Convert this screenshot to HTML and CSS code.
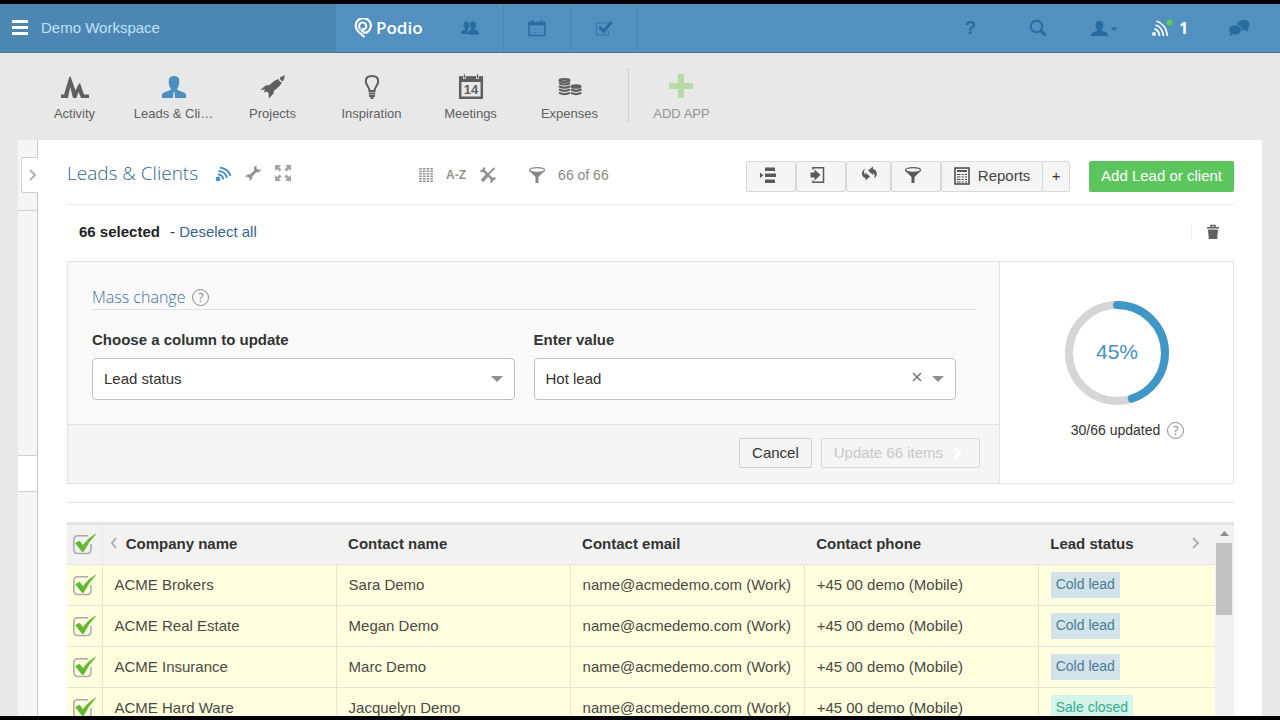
FILE: index.html
```
<!DOCTYPE html>
<html lang="en">
<head>
    <meta charset="UTF-8">
    <meta name="viewport" content="width=device-width, initial-scale=1.0">
    <title>Leads &amp; Clients - Podio</title>
    <link rel="stylesheet" href="styles.css">
</head>
<body>
    <header class="navbar">
        <div class="workspace">
            <button class="menu-button" aria-label="Menu">
                <svg width="18" height="16" viewBox="0 0 18 16" fill="currentColor"><path d="M1 0h16v3H1zM1 6h16v3H1zM1 12h16v3H1z"/></svg>
            </button>
            <a href="#" class="workspace-name">Demo Workspace</a>
        </div>
        <nav class="nav-main">
            <a href="#" class="brand">
                <svg width="18" height="20" viewBox="0 0 18 20" fill="none" stroke="currentColor" stroke-width="2.200"><path d="M10.500 19L4 13.200A7.600 7.600 0 1 1 13.500 14Q12 15 10 14.700"/><path d="M10.500 15L7 11.500M6.500 11A3.600 3.600 0 1 1 11 10.800Q9.500 11.800 8 10.500"/></svg>
                Podio
            </a>
            <a href="#" class="nav-tab" aria-label="People">
                <svg width="18" height="16" viewBox="0 0 18 16" fill="currentColor"><path d="M0 14c0-3 1.500-3.500 4-4.500V8.500C1.500 6 2.500 1.500 5.500 1.500 7 1.500 8.300 2.500 8.300 5S7.500 8 7.200 8.500v1.200L5.500 14z"/><path d="M6.500 14.500c0-3.200 1.500-4 3.700-5V8.300C8 6 8.500 1.500 12 1.500S16 6 13.800 8.300v1.200c2.700 1 4.200 1.800 4.200 5z"/></svg>
            </a>
            <a href="#" class="nav-tab" aria-label="Calendar">
                <svg width="18" height="17" viewBox="0 0 18 17" fill="none" stroke="currentColor"><path d="M1 2.500h16v13H1z" stroke-width="1.500"/><path d="M1 4h16" stroke-width="2.500"/><path d="M4.500 0v4M13.500 0v4" stroke-width="1.500"/><path d="M4 9.500h10M4 12.500h10" stroke-dasharray="1.500 1.300" stroke-opacity=".6"/></svg>
            </a>
            <a href="#" class="nav-tab" aria-label="Tasks">
                <svg width="18" height="17" viewBox="0 0 18 17" fill="none" stroke="currentColor"><path d="M12 3H1.500v12h12v-4" stroke-opacity=".7"/><path d="M4.500 7l4 4.500L16.500 2" stroke-width="3"/></svg>
            </a>
        </nav>
        <nav class="nav-tools">
            <a href="#" class="nav-tool nav-help" aria-label="Help">?</a>
            <a href="#" class="nav-tool" aria-label="Search">
                <svg width="18" height="18" viewBox="0 0 18 18" fill="none" stroke="currentColor"><circle cx="7.500" cy="7.500" r="5.800" stroke-width="2"/><path d="M11.500 11.500l5 5" stroke-width="3"/></svg>
            </a>
            <a href="#" class="nav-tool" aria-label="Account">
                <svg width="27" height="17" viewBox="0 0 27 17" fill="currentColor"><path d="M0 16c0-3 1-3.500 6-5V9.500C3.500 6 4 1 8.500 1S13 6 11 9.500V11c5 1.500 6 2 6 5z"/><path d="M19.500 7.500h7l-3.500 3.500z"/></svg>
            </a>
            <a href="#" class="nav-tool nav-feed" aria-label="Notifications">
                <svg width="22" height="18" viewBox="0 0 22 18" fill="none" stroke="currentColor" stroke-width="1.800"><circle cx="3" cy="15" r="2" fill="currentColor" stroke="none"/><path d="M3.500 10q4.500 1 5 7M4.500 6q7 2 8 11M5.500 2q9.500 3 11 15"/><circle cx="18.500" cy="3.500" r="3" fill="#5fcb50" stroke="none"/></svg>
                <b>1</b>
            </a>
            <a href="#" class="nav-tool" aria-label="Chat">
                <svg width="22" height="18" viewBox="0 0 22 18" fill="currentColor"><path d="M9 5.500C10 2 13 1 16 1c4 0 5.500 2.500 5.500 5 0 2-1 3-2 3.800L20.500 13l-3.800-2c-1 .2-2 .1-3 0 0-3-1.500-5-4.700-5.500z"/><path d="M7 6.500c4 0 6 2 6 4.500s-2.500 4.500-6 4.500l-2-.2L1.500 17l.8-3.200C-.5 10.500 1.500 6.500 7 6.500z"/></svg>
            </a>
        </nav>
    </header>

    <nav class="app-bar">
        <a href="#" class="app">
            <svg width="28" height="28" viewBox="0 0 28 28" fill="currentColor"><path d="M0 21.500h3L8.500 3.500h1l5 14L18 10.500h1.200l3.800 11h5v3.500h-8l-2.500-6-2 6H12L9.200 14 7 25H0z"/></svg>
            <span>Activity</span>
        </a>
        <a href="#" class="app active">
            <svg width="28" height="28" viewBox="0 0 28 28" fill="currentColor"><path d="M2 25v-3c0-2 3-3 7.500-4.500L11 16C8.500 13 8.500 9 9 6c.5-2 2.500-3 5-3s4.500 1 5 3c.5 3 .5 7-2 10l1.500 1.500C23 19 26 20 26 22v3H15l-.5-6h-1L13 25z"/></svg>
            <span>Leads &amp; Cli…</span>
        </a>
        <a href="#" class="app">
            <svg width="28" height="28" viewBox="0 0 28 28" fill="currentColor"><path d="M21 4.500L26 2l-1.500 5.500c-.5.800-1.500.800-2.500-.3s-1.500-2-1-2.700z"/><path d="M19.500 6c.5 2 1.500 3 3.500 3.500-2 3.500-5 6-8 8l-.5 3-4.500 5-.5-5.500L8 18.500l-3 1 1-3-4.500.5 5-4.500 4-.5C13 9.500 16 7 19.500 6z"/></svg>
            <span>Projects</span>
        </a>
        <a href="#" class="app">
            <svg width="28" height="28" viewBox="0 0 28 28" fill="none" stroke="currentColor" stroke-width="2"><path d="M11.500 18c0-4-3.700-5.500-3.700-9.700C7.800 4.800 10.500 3 14 3s6.200 1.800 6.200 5.300C20.200 12.500 16.500 14 16.500 18z"/><path d="M10.800 20.500h6.400M11 23h6M12.500 25h3"/></svg>
            <span>Inspiration</span>
        </a>
        <a href="#" class="app">
            <svg width="28" height="28" viewBox="0 0 28 28"><path d="M3.200 4.500h21.600v20.200H3.200z" fill="none" stroke="currentColor" stroke-width="2.500"/><path d="M2 3.500h24v5.500H2z" fill="currentColor"/><path d="M7.500 2v4M20.500 2v4" stroke="#e8e8e8" stroke-width="3"/><path d="M7.500 1.500v4M20.500 1.500v4" stroke="currentColor" stroke-width="1.500"/><text x="14" y="21" class="calendar-day">14</text></svg>
            <span>Meetings</span>
        </a>
        <a href="#" class="app">
            <svg width="28" height="28" viewBox="0 0 28 28" fill="none" stroke="currentColor" stroke-width="2.200"><ellipse cx="8.500" cy="7.500" rx="5" ry="1.300"/><path d="M3 10q5.500 3 11 0M3 13.200q5.500 3 11 0M3 16.400q5.500 3 11 0M3 19.600q5.500 3 11 0"/><ellipse cx="20" cy="13.500" rx="4.500" ry="1.200"/><path d="M15 16.300q5 3 10.500 0M15 19.600q5 3 10.500 0"/></svg>
            <span>Expenses</span>
        </a>
        <a href="#" class="app add-app">
            <svg width="28" height="28" viewBox="0 0 28 28" fill="currentColor"><path d="M10 1h6v9h9v6h-9v9h-6v-9H1v-6h9z"/></svg>
            <span>ADD APP</span>
        </a>
    </nav>

    <div class="panel">
        <aside class="sidebar">
            <div class="sidebar-top">
                <button class="sidebar-toggle" aria-label="Show sidebar">
                    <svg width="8" height="12" viewBox="0 0 8 12" fill="none" stroke="currentColor" stroke-width="2"><path d="M1 1l5 5-5 5"/></svg>
                </button>
            </div>
            <div class="sidebar-tab"></div>
        </aside>

        <main class="content">
            <div class="toolbar">
                <div class="title-group">
                    <h1>Leads &amp; Clients</h1>
                    <button class="icon-button follow" aria-label="Follow">
                        <svg width="18" height="18" viewBox="0 0 18 18" fill="none" stroke="currentColor" stroke-width="1.800"><circle cx="4" cy="15" r="2.400" fill="currentColor" stroke="none"/><path d="M4 10.500q4.500 0 5.500 5M4.500 7q7 .5 8.500 7M6 3.500q8.500 1.500 10.500 8.500"/></svg>
                    </button>
                    <button class="icon-button" aria-label="Settings">
                        <svg width="18" height="18" viewBox="0 0 18 18"><path d="M12.500 1.500c-2.500.8-3 3-2.300 5L6 10.500c-2-.5-4 .3-4.500 3l2.200-.8 2 1.500-.5 2.500c2-.2 3.500-2.200 3-4.200l4.100-4.200c2.200.5 4.200-.8 4.700-3.200l-2.500 1-2-1.500z" fill="currentColor"/></svg>
                    </button>
                    <button class="icon-button expand" aria-label="Full screen">
                        <svg width="18" height="18" viewBox="0 0 18 18" fill="currentColor"><path d="M1 1h6L5 3l2.500 2.500-2 2L3 5 1 7zM17 1v6l-2-2-2.500 2.500-2-2L13 3l-2-2zM1 17v-6l2 2 2.500-2.500 2 2L5 15l2 2zM17 17h-6l2-2-2.500-2.500 2-2L15 13l2-2z"/></svg>
                    </button>
                </div>
                <div class="view-group">
                    <button class="icon-button" aria-label="Columns">
                        <svg width="14" height="14" viewBox="0 0 14 14" stroke="currentColor" stroke-width="2.600" stroke-dasharray="1.500 1"><path d="M1.500 0v14M5.200 0v14M8.900 0v14M12.600 0v14"/></svg>
                    </button>
                    <button class="icon-button sort" aria-label="Sort">A-Z</button>
                    <button class="icon-button" aria-label="Tools">
                        <svg width="18" height="18" viewBox="0 0 18 18" fill="none" stroke="currentColor"><path d="M15.500 2L8 9.500" stroke-width="1.800"/><path d="M8.500 9L3 15" stroke-width="3.500"/><path d="M4.500 4.500l8.500 8.500" stroke-width="2.500"/><path d="M1.500 4.500q4 2 3.500-3M12.500 16.500q-.5-4 4-4" stroke-width="2.500"/></svg>
                    </button>
                    <button class="filter-count">
                        <svg width="18" height="18" viewBox="0 0 18 18"><ellipse cx="9" cy="4" rx="7.500" ry="2.300" fill="none" stroke="currentColor" stroke-width="1.300"/><path d="M1 4.500q8 4 16 0L10.500 11v6h-3v-6z" fill="currentColor"/></svg>
                        66 of 66
                    </button>
                </div>
                <div class="action-group">
                    <button class="tool-button" aria-label="Layout">
                        <svg width="18" height="18" viewBox="0 0 18 18" fill="currentColor"><path d="M6 1.500h10v3.500H6zM6 7.500h11v3.500H6zM6 13.500h10V17H6zM1 6.500L4.500 9.200 1 12z"/></svg>
                    </button>
                    <button class="tool-button" aria-label="Import">
                        <svg width="18" height="18" viewBox="0 0 18 18"><path d="M4 3.500V1.800h10.500v14.400H4v-1.700" fill="none" stroke="currentColor" stroke-width="1.500"/><path d="M1.500 6.500h4v-3l6 5.500-6 5.500v-3h-4z" fill="currentColor"/></svg>
                    </button>
                    <button class="tool-button narrow" aria-label="Sync">
                        <svg width="18" height="18" viewBox="0 0 18 18" fill="currentColor"><path d="M5.500 2.500C3.500 4.500 3.500 7 5.500 9V6.500L10 10.500l-4.500 4V12C1 11 .5 5 5.500 2.500z"/><path d="M8 4.500l5-4V3c4.500 1 5 6 1.500 9.500.5-2.500 0-4.500-1.500-5.500v2z"/></svg>
                    </button>
                    <button class="tool-button" aria-label="Filter">
                        <svg width="18" height="18" viewBox="0 0 18 18"><ellipse cx="9" cy="4" rx="7.500" ry="2.300" fill="none" stroke="currentColor" stroke-width="1.300"/><path d="M1 4.500q8 4 16 0L10.500 11v6h-3v-6z" fill="currentColor"/></svg>
                    </button>
                    <button class="reports-button">
                        <svg width="16" height="18" viewBox="0 0 16 18" fill="none" stroke="currentColor"><path d="M1 1h14v16H1z" stroke-width="1.500"/><path d="M3 4h10" stroke-width="1.800"/><path d="M3 7.500h10M3 10h10M3 12.500h10M3 15h10" stroke-dasharray="3.500 1.200 2 1.200 2.100 0"/></svg>
                        Reports
                    </button>
                    <button class="reports-add" aria-label="Add report">+</button>
                    <button class="add-button">Add Lead or client</button>
                </div>
            </div>

            <div class="selection">
                <p><strong>66 selected</strong> - <a href="#">Deselect all</a></p>
                <button class="delete-button" aria-label="Delete">
                    <svg width="14" height="16" viewBox="0 0 14 16"><path d="M2 5.500h10L11.200 15H2.800z" fill="currentColor"/><path d="M1 3.700h12M5 3V1.500h4V3" fill="none" stroke="currentColor" stroke-width="1.500"/></svg>
                </button>
            </div>

            <section class="mass-change">
                <form class="mass-form">
                    <div class="mass-fields">
                        <h2>Mass change <span class="help">?</span></h2>
                        <div class="field-row">
                            <div class="field">
                                <label for="column">Choose a column to update</label>
                                <select id="column">
                                    <option>Lead status</option>
                                </select>
                            </div>
                            <div class="field">
                                <label for="value">Enter value</label>
                                <div class="clearable">
                                    <select id="value">
                                        <option>Hot lead</option>
                                    </select>
                                    <button type="button" class="clear" aria-label="Clear value">
                                        <svg width="10" height="10" viewBox="0 0 10 10" stroke="currentColor" stroke-width="1.600"><path d="M1 1l8 8M9 1L1 9"/></svg>
                                    </button>
                                </div>
                            </div>
                        </div>
                    </div>
                    <div class="mass-actions">
                        <button type="button" class="form-button">Cancel</button>
                        <button type="button" class="form-button update" disabled>
                            Update 66 items
                            <svg width="10" height="14" viewBox="0 0 10 14" fill="none" stroke="#fff" stroke-width="3"><path d="M2 2l5 5-5 5"/></svg>
                        </button>
                    </div>
                </form>
                <div class="progress">
                    <svg width="106" height="106" viewBox="0 0 106 106" fill="none" stroke-width="8">
                        <circle cx="53" cy="53" r="48" stroke="#d6d6d6"/>
                        <circle cx="53" cy="53" r="48" stroke="#3f97c7" stroke-linecap="round" pathLength="100" stroke-dasharray="45 55" transform="rotate(-90 53 53)"/>
                        <text x="53" y="59" class="percent">45%</text>
                    </svg>
                    <p>30/66 updated <span class="help">?</span></p>
                </div>
            </section>

            <div class="grid">
                <table>
                    <thead>
                        <tr>
                            <th class="check"><input type="checkbox" aria-label="Select all" checked></th>
                            <th class="first">
                                <button class="scroll-button" aria-label="Previous columns"><svg width="8" height="12" viewBox="0 0 8 12" fill="none" stroke="currentColor" stroke-width="2"><path d="M6 1L2 6l4 5"/></svg></button>
                                Company name
                            </th>
                            <th>Contact name</th>
                            <th>Contact email</th>
                            <th>Contact phone</th>
                            <th class="status">
                                <div class="status-head">
                                    Lead status
                                    <button class="scroll-button" aria-label="Next columns"><svg width="8" height="12" viewBox="0 0 8 12" fill="none" stroke="currentColor" stroke-width="2"><path d="M1 1l5 5-5 5"/></svg></button>
                                </div>
                            </th>
                        </tr>
                    </thead>
                    <tbody>
                        <tr>
                            <td class="check"><input type="checkbox" aria-label="Select ACME Brokers" checked></td>
                            <td>ACME Brokers</td>
                            <td>Sara Demo</td>
                            <td>name@acmedemo.com (Work)</td>
                            <td>+45 00 demo (Mobile)</td>
                            <td><span class="tag cold">Cold lead</span></td>
                        </tr>
                        <tr>
                            <td class="check"><input type="checkbox" aria-label="Select ACME Real Estate" checked></td>
                            <td>ACME Real Estate</td>
                            <td>Megan Demo</td>
                            <td>name@acmedemo.com (Work)</td>
                            <td>+45 00 demo (Mobile)</td>
                            <td><span class="tag cold">Cold lead</span></td>
                        </tr>
                        <tr>
                            <td class="check"><input type="checkbox" aria-label="Select ACME Insurance" checked></td>
                            <td>ACME Insurance</td>
                            <td>Marc Demo</td>
                            <td>name@acmedemo.com (Work)</td>
                            <td>+45 00 demo (Mobile)</td>
                            <td><span class="tag cold">Cold lead</span></td>
                        </tr>
                        <tr>
                            <td class="check"><input type="checkbox" aria-label="Select ACME Hard Ware" checked></td>
                            <td>ACME Hard Ware</td>
                            <td>Jacquelyn Demo</td>
                            <td>name@acmedemo.com (Work)</td>
                            <td>+45 00 demo (Mobile)</td>
                            <td><span class="tag closed">Sale closed</span></td>
                        </tr>
                    </tbody>
                </table>
                <div class="scrollbar">
                    <svg width="9" height="5" viewBox="0 0 9 5" fill="#8c8c8c"><path d="M0 5L4.500 0 9 5z"/></svg>
                    <div class="thumb"></div>
                </div>
            </div>
        </main>
    </div>
</body>
</html>
```
FILE: styles.css
```
* {
    box-sizing: border-box;
}

body {
    margin: 0;
    height: 100vh;
    overflow: hidden;
    display: flex;
    flex-direction: column;
    border-top: 4px solid #000;
    border-bottom: 4px solid #000;
    background: #e8e8e8;
    font-family: "Liberation Sans", Arial, sans-serif;
    font-size: 15px;
    line-height: 20px;
    color: #333;
}

a {
    color: #33658d;
    text-decoration: none;
}

button {
    margin: 0;
    padding: 0;
    border: 0;
    background: none;
    font: inherit;
    color: inherit;
    cursor: pointer;
}

svg {
    display: block;
    flex: none;
}

h1,
h2,
p {
    margin: 0;
}

/* Top navigation */
.navbar {
    display: flex;
    flex: none;
    height: 49px;
    background: #5190bf;
    border-bottom: 1px solid #4b7390;
}

.workspace {
    display: flex;
    align-items: center;
    gap: 12px;
    width: 336px;
    padding-left: 11px;
    background: #4b87b2;
}

.menu-button {
    color: #fff;
}

.workspace-name {
    color: #c3e0f8;
}

.nav-main,
.nav-tools {
    display: flex;
}

.nav-tools {
    margin-left: auto;
    padding-right: 8px;
}

.brand {
    display: flex;
    align-items: center;
    gap: 4px;
    width: 101px;
    padding-left: 18px;
    color: #fff;
    font-family: "Open Sans", sans-serif;
    font-size: 17px;
    font-weight: 600;
}

.nav-tab,
.nav-tool {
    display: flex;
    align-items: center;
    justify-content: center;
    width: 67px;
    color: #286b9e;
}

.nav-tab {
    border-right: 1px solid #4786b5;
}

.nav-help {
    font-size: 18px;
    font-weight: bold;
}

.nav-feed {
    gap: 6px;
    padding-right: 4px;
    color: #fff;
    font-family: "Open Sans", sans-serif;
    font-size: 16px;
}

/* App bar */
.app-bar {
    display: flex;
    flex: none;
    height: 87px;
    padding: 15px 25px 17px;
}

.app {
    display: flex;
    flex-direction: column;
    align-items: center;
    gap: 3px;
    width: 99px;
    padding-top: 5px;
    color: #5f5f5f;
    font-size: 13px;
}

.app.active svg {
    color: #4a90c0;
}

.calendar-day {
    font-size: 13px;
    font-weight: bold;
    text-anchor: middle;
    fill: #5f5f5f;
}

.app.add-app {
    width: 106px;
    margin-left: 9px;
    border-left: 1px solid #d2d2d2;
    color: #959595;
}

.app.add-app svg {
    color: #b7dba5;
}

/* Page panel */
.panel {
    display: flex;
    flex: 1;
    min-height: 0;
    margin: 0 18px;
    background: #fff;
}

.sidebar {
    flex: none;
    width: 20px;
    background: #f5f5f5;
    border-right: 1px solid #c8c8c8;
}

.sidebar-top {
    height: 71px;
    padding: 17px 0 0 3px;
    border-bottom: 1px solid #d0d0d0;
}

.sidebar-toggle {
    position: relative;
    display: flex;
    align-items: center;
    justify-content: center;
    width: 17px;
    height: 36px;
    padding-left: 6px;
    background: #fff;
    border: 1px solid #d0d0d0;
    border-right: 0;
    border-radius: 3px 0 0 3px;
    color: #b0b0b0;
}

.sidebar-tab {
    height: 37px;
    margin-top: 244px;
    background: #fff;
    border-top: 1px solid #d0d0d0;
    border-bottom: 1px solid #d0d0d0;
}

.content {
    flex: 1;
    min-width: 0;
    padding: 0 28px 0 29px;
}

.toolbar {
    display: flex;
    align-items: center;
    height: 65px;
    padding-top: 8px;
    border-bottom: 1px solid #ebebeb;
}

.title-group {
    display: flex;
    align-items: center;
    gap: 12px;
    width: 30%;
    margin-top: -6px;
}

h1 {
    margin-right: 4px;
    font-family: "Open Sans", sans-serif;
    font-size: 19px;
    font-weight: 300;
    line-height: 26px;
    color: #33658d;
}

.icon-button {
    color: #929292;
}

.icon-button.follow {
    color: #4a90c8;
}

.icon-button.expand {
    color: #a4a4a4;
}

.view-group {
    display: flex;
    align-items: center;
    gap: 13px;
    margin: -2px 0 0 2px;
}

.sort {
    font-size: 12px;
    font-weight: bold;
}

.filter-count {
    display: flex;
    align-items: center;
    gap: 12px;
    margin-left: 18px;
    color: #888;
    font-size: 14px;
}

.action-group {
    display: flex;
    margin-left: auto;
}

.tool-button,
.reports-button,
.reports-add {
    display: flex;
    align-items: center;
    justify-content: center;
    width: 50px;
    height: 31px;
    background: #f5f5f5;
    border: 1px solid #d8d8d8;
    border-radius: 2px;
    color: #5a5a5a;
}

.tool-button {
    padding: 0 6px 2px 0;
}

.tool-button.narrow {
    width: 45px;
    padding-right: 0;
}

.reports-button {
    gap: 8px;
    width: 102px;
    color: #444;
}

.reports-add {
    width: 28px;
    margin-left: -1px;
    color: #333;
}

.add-button {
    height: 31px;
    margin-left: 19px;
    padding: 0 12px;
    background: #5cc55e;
    border-radius: 2px;
    color: #fff;
}

/* Selected rows */
.selection {
    display: flex;
    align-items: center;
    justify-content: space-between;
    height: 56px;
    padding: 0 14px 2px 12px;
}

.selection strong {
    margin-right: 6px;
    color: #222;
}

.delete-button {
    padding-left: 14px;
    border-left: 1px solid #f0f0f0;
    color: #606060;
}

/* Mass change box */
.mass-change {
    display: flex;
    border: 1px solid #e2e2e2;
}

.mass-form {
    flex: 1;
    background: #fafafa;
    border-right: 1px solid #e2e2e2;
}

.mass-fields {
    padding: 24px 23px 24px 24px;
}

h2 {
    display: flex;
    align-items: center;
    gap: 7px;
    border-bottom: 1px solid #e0e0e0;
    font-family: "Open Sans", sans-serif;
    font-size: 16px;
    font-weight: 300;
    line-height: 23px;
    color: #44709b;
}

.help {
    width: 17px;
    height: 17px;
    border: 1px solid #8a8a8a;
    border-radius: 50%;
    font-family: "Open Sans", sans-serif;
    font-size: 12px;
    font-weight: 400;
    line-height: 15px;
    text-align: center;
    color: #808080;
}

.field-row {
    display: flex;
    gap: 19px;
    margin-top: 20px;
    padding-right: 20px;
}

.field {
    flex: 1;
}

.field label {
    display: block;
    margin-bottom: 8px;
    font-weight: bold;
}

.field select {
    display: block;
    width: 100%;
    height: 42px;
    padding: 0 11px;
    appearance: none;
    background: #fff url("data:image/svg+xml,%3Csvg xmlns='http://www.w3.org/2000/svg' width='12' height='6'%3E%3Cpath d='M0 0h12L6 6z' fill='%23909090'/%3E%3C/svg%3E") no-repeat right 11px center;
    border: 1px solid #c0c0c0;
    border-radius: 4px;
    font: inherit;
    color: #333;
}

.clearable {
    position: relative;
}

.clear {
    position: absolute;
    top: 14px;
    right: 34px;
    color: #777;
}

.mass-actions {
    display: flex;
    justify-content: flex-end;
    gap: 9px;
    padding: 13px 19px 15px;
    background: #f5f5f5;
    border-top: 1px solid #e2e2e2;
}

.form-button {
    display: flex;
    align-items: center;
    height: 30px;
    padding: 0 12px;
    border: 1px solid #d0d0d0;
    border-radius: 2px;
}

.form-button.update {
    gap: 10px;
    padding-right: 16px;
    border-color: #d8d8d8;
    color: #c8c8c8;
}

.progress {
    display: flex;
    flex-direction: column;
    align-items: center;
    width: 233px;
    padding-top: 38px;
}

.percent {
    font-size: 21px;
    text-anchor: middle;
    fill: #4590c0;
}

.progress p {
    display: flex;
    align-items: center;
    gap: 7px;
    margin-top: 14px;
    padding-left: 22px;
    font-size: 14px;
}

/* Items table */
.grid {
    display: flex;
    margin-top: 18px;
    padding-top: 19px;
    border-top: 1px solid #e2e2e2;
}

table {
    flex: 1;
    width: 100%;
    min-width: 0;
    table-layout: fixed;
    border-collapse: collapse;
    border-top: 3px solid #e4e4e4;
}

th,
td {
    height: 41px;
    padding: 0 0 0 12px;
    text-align: left;
    white-space: nowrap;
}

th {
    padding-bottom: 2px;
    background: #f2f2f2;
}

td {
    background: #ffffe0;
    border-top: 1px solid #e4e4d4;
    border-left: 1px solid #e4e4d4;
    color: #4a4a42;
}

.check {
    width: 35px;
    padding-left: 5px;
    border-left: 0;
}

th.first {
    padding-left: 7px;
    border-left: 1px solid #e8e8e8;
}

th.status {
    width: 15.4%;
}

.status-head {
    display: flex;
    align-items: center;
    justify-content: space-between;
    padding-right: 15px;
}

.scroll-button {
    color: #b0b0b0;
}

.first .scroll-button {
    margin-right: 4px;
}

.scroll-button svg {
    display: inline-block;
}

input[type="checkbox"] {
    display: block;
    width: 24px;
    height: 22px;
    margin: 0;
    appearance: none;
    background: url("data:image/svg+xml,%3Csvg xmlns='http://www.w3.org/2000/svg' width='24' height='22' fill='none'%3E%3Crect x='1.500' y='3' width='18' height='17.500' rx='4' fill='white' stroke='%23aaa' stroke-width='1.500'/%3E%3C/svg%3E") no-repeat;
}

input[type="checkbox"]:checked {
    background-image: url("data:image/svg+xml,%3Csvg xmlns='http://www.w3.org/2000/svg' width='24' height='22' fill='none'%3E%3Cpath d='M16 2.800H6Q1.800 2.800 1.800 7v9q0 4.500 4.200 4.500h9q4 0 4-4.500v-5' stroke='%23aaa' stroke-width='1.500'/%3E%3Cpath d='M3.500 10.200L7.500 8l3.500 4.500Q16 5 23.800 1 16.500 8.500 11.500 18.500H10z' fill='%2363b832' stroke='%2363b832' stroke-width='.6'/%3E%3C/svg%3E");
}

.tag {
    display: inline-block;
    height: 26px;
    padding: 0 5px;
    font-size: 14px;
    line-height: 24px;
    vertical-align: middle;
}

.tag.cold {
    background: #d2e4ea;
    color: #4a7b96;
}

.tag.closed {
    background: #d2f4ea;
    color: #38ab88;
}

.scrollbar {
    display: flex;
    flex: none;
    flex-direction: column;
    align-items: center;
    gap: 7px;
    width: 19px;
    padding: 6px 2px 0 1px;
    background: #f1f1f1;
    border-top: 3px solid #e4e4e4;
}

.thumb {
    width: 100%;
    height: 72px;
    background: #c1c1c1;
}
```
